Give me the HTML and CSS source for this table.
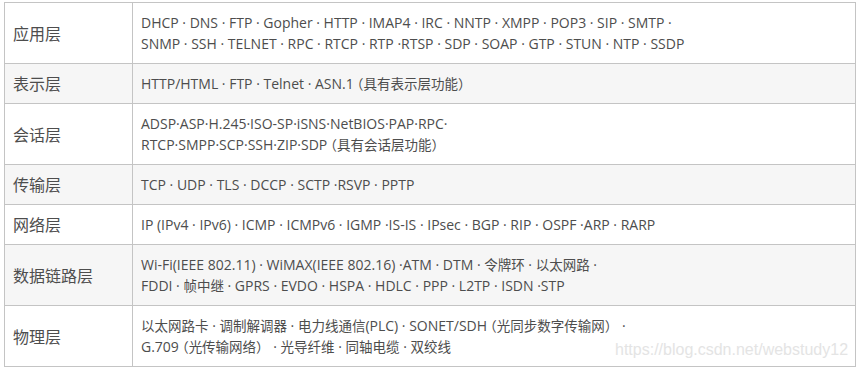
FILE: index.html
```html
<!DOCTYPE html>
<html lang="zh-CN">
<head>
<meta charset="utf-8">
<title>OSI 七层协议</title>
<link rel="stylesheet" href="styles.css">
</head>
<body>
<div class="wrap">
  <table class="layers">
    <tbody>
      <tr>
        <td class="name">应用层</td>
        <td class="protos">DHCP · DNS · FTP · Gopher · HTTP · IMAP4 · IRC · NNTP · XMPP · POP3 · SIP · SMTP ·<br>SNMP · SSH · TELNET · RPC · RTCP · RTP ·RTSP · SDP · SOAP · GTP · STUN · NTP · SSDP</td>
      </tr>
      <tr>
        <td class="name">表示层</td>
        <td class="protos">HTTP/HTML · FTP · Telnet · ASN.1<span class="cjk lp">（</span><span class="cjk">具有表示层功能）</span></td>
      </tr>
      <tr>
        <td class="name">会话层</td>
        <td class="protos">ADSP·ASP·H.245·ISO-SP·iSNS·NetBIOS·PAP·RPC·<br>RTCP·SMPP·SCP·SSH·ZIP·SDP<span class="cjk lp">（</span><span class="cjk">具有会话层功能）</span></td>
      </tr>
      <tr>
        <td class="name">传输层</td>
        <td class="protos">TCP · UDP · TLS · DCCP · SCTP ·RSVP · PPTP</td>
      </tr>
      <tr>
        <td class="name">网络层</td>
        <td class="protos">IP (IPv4 · IPv6) · ICMP · ICMPv6 · IGMP ·IS-IS · IPsec · BGP · RIP · OSPF ·ARP · RARP</td>
      </tr>
      <tr>
        <td class="name">数据链路层</td>
        <td class="protos">Wi-Fi(IEEE 802.11) · WiMAX(IEEE 802.16) ·ATM · DTM · <span class="cjk">令牌环</span> · <span class="cjk">以太网路</span> ·<br>FDDI · <span class="cjk">帧中继</span> · GPRS · EVDO · HSPA · HDLC · PPP · L2TP · ISDN ·STP</td>
      </tr>
      <tr>
        <td class="name">物理层</td>
        <td class="protos"><span class="cjk">以太网路卡</span> · <span class="cjk">调制解调器</span> · <span class="cjk">电力线通信</span>(PLC) · SONET/SDH<span class="cjk lp">（</span><span class="cjk">光同步数字传输网）</span> ·<br>G.709<span class="cjk lp">（</span><span class="cjk">光传输网络）</span> · <span class="cjk">光导纤维</span> · <span class="cjk">同轴电缆</span> · <span class="cjk">双绞线</span></td>
      </tr>
    </tbody>
  </table>
  <span class="watermark">https://blog.csdn.net/webstudy12</span>
</div>
</body>
</html>
```

FILE: styles.css
```css
html, body {
  margin: 0;
  padding: 0;
  background: #ffffff;
}

body {
  font-family: "Open Sans", "Noto Sans CJK SC", sans-serif;
  color: #4d4d4d;
}

.wrap {
  position: relative;
  padding: 2px 0 0 4px;
  width: 852px;
}

.layers {
  border-collapse: collapse;
  width: 852px;
  table-layout: fixed;
}

.layers td {
  border: 1px solid #c4c4c4;
  padding: 9px 8px;
  line-height: 21px;
  vertical-align: middle;
}

.layers tr:nth-child(2n) td {
  background: #f6f6f6;
}

.name {
  width: 111px;
  font-size: 16px;
  font-family: "Noto Sans CJK SC", sans-serif;
  white-space: nowrap;
}

.protos {
  font-size: 14px;
  padding-left: 9px;
  white-space: nowrap;
}

.cjk {
  font-family: "Noto Sans CJK SC", sans-serif;
  font-size: 13.5px;
}

.lp {
  font-feature-settings: "halt";
  margin-left: 3px;
}

.watermark {
  position: absolute;
  left: 615px;
  top: 340px;
  font-family: "Liberation Sans", Arial, sans-serif;
  font-size: 16px;
  line-height: 20px;
  color: #e4e4e4;
}
```
